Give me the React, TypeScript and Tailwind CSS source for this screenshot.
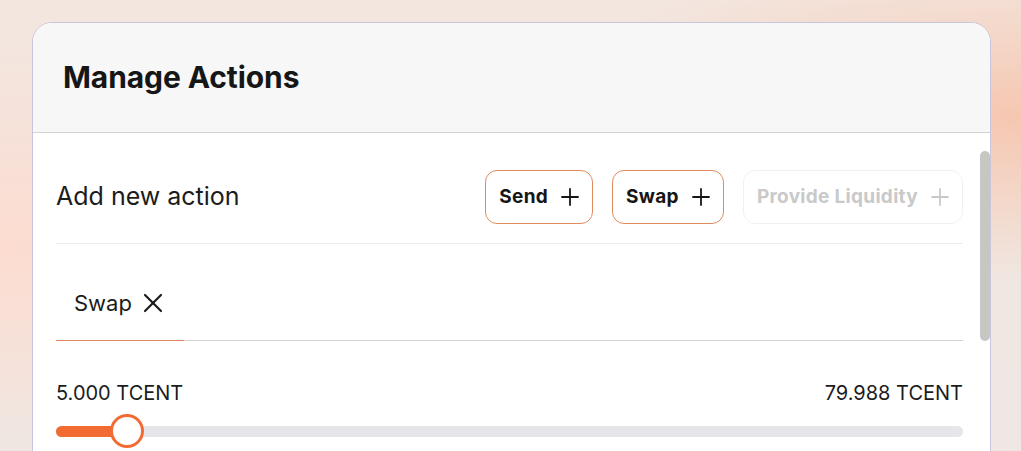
import { X } from "lucide-react";

const actions = [
    { label: "Send", disabled: false },
    { label: "Swap", disabled: false },
    { label: "Provide Liquidity", disabled: true },
];

const slider = { min: 0, max: 79.988, value: 5.0 };

function PlusIcon({ className }: { className?: string }) {
    return (
        <svg
            width="18"
            height="18"
            viewBox="0 0 18 18"
            fill="none"
            stroke="currentColor"
            strokeWidth="1.8"
            strokeLinecap="round"
            className={className}
        >
            <path d="M9 1v16M1 9h16" />
        </svg>
    );
}

export default function App() {
    const pct = ((slider.value - slider.min) / (slider.max - slider.min)) * 100 + 1.6;

    return (
        <div
            className="h-screen w-full overflow-hidden bg-[radial-gradient(ellipse_at_100%_26%,#f6c7b1_0%,transparent_34%),radial-gradient(ellipse_at_0%_55%,#fcdcd0_0%,transparent_60%),linear-gradient(180deg,#f3e6df_0%,#eee7e3_100%)] px-[32px] pt-[22px] text-[#1c1c1c]"
            style={{ fontFamily: "Inter, 'Noto Sans', sans-serif" }}
        >
            <div className="w-[959px] overflow-hidden rounded-[20px] border border-[#c8c6dd] bg-white">
                <div className="flex h-[110px] items-center border-b border-[#d2d2d6] bg-[#f7f7f7] px-[30px]">
                    <h1 className="text-[30px] font-bold tracking-[-0.1px] text-[#161616]">
                        Manage Actions
                    </h1>
                </div>

                <div className="relative pb-[60px] pl-[23px] pr-[27px] pt-[37px]">
                    <div className="flex items-center justify-between border-b border-[#ececec] pb-[19px]">
                        <span className="text-[25px]">Add new action</span>
                        <div className="flex items-center gap-[19px]">
                            {actions.map((action) => (
                                <button
                                    key={action.label}
                                    disabled={action.disabled}
                                    className={
                                        action.disabled
                                            ? "flex h-[54px] items-center gap-[13px] rounded-[12px] border border-[#f0f0f0] px-[13px] text-[19px] font-bold tracking-[0.3px] text-[#c9c9c9]"
                                            : "flex h-[54px] items-center gap-[13px] rounded-[12px] border border-[#e08a5e] px-[13px] text-[19px] font-bold tracking-[0.3px] text-[#161616]"
                                    }
                                >
                                    {action.label}
                                    <PlusIcon />
                                </button>
                            ))}
                        </div>
                    </div>

                    <div className="mt-[44px] flex border-b border-[#d4d4d8]">
                        <div className="-mb-px flex w-[128px] items-center gap-[13px] border-b border-[#e08a5e] px-[18px] pb-[22px] text-[22px] leading-[30px]">
                            Swap
                            <X size={32} strokeWidth={1.6} className="-mx-[8px] -my-[1px]" />
                        </div>
                    </div>

                    <div className="mt-[40px] flex justify-between text-[20px] leading-[24px]">
                        <span>5.000 TCENT</span>
                        <span>79.988 TCENT</span>
                    </div>

                    <div className="relative mt-[9px] flex h-[34px] items-center">
                        <div className="h-[11px] w-full rounded-full bg-[#e6e6ea]">
                            <div
                                className="h-full rounded-full bg-[#f26b33]"
                                style={{ width: `${pct}%` }}
                            />
                        </div>
                        <div
                            className="absolute top-0 h-[34px] w-[34px] -translate-x-1/2 rounded-full border-[3px] border-[#f26b33] bg-white"
                            style={{ left: `${pct}%` }}
                        />
                    </div>

                    <div className="absolute right-0 top-[18px] h-[190px] w-[10px] rounded-full bg-[#c6c6c3]" />
                </div>
            </div>
        </div>
    );
}
